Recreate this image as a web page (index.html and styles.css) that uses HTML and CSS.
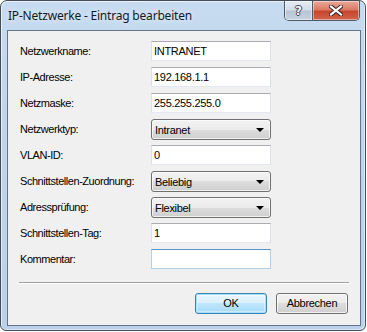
FILE: index.html
```html
<!DOCTYPE html>
<html lang="de">
<head>
    <meta charset="UTF-8">
    <title>IP-Netzwerke - Eintrag bearbeiten</title>
    <link rel="stylesheet" href="styles.css">
</head>
<body>
    <div class="window">
        <div class="titlebar">
            <span class="title">IP-Netzwerke - Eintrag bearbeiten</span>
            <div class="caption-buttons">
                <div class="cap-btn help"><span>?</span></div>
                <div class="cap-btn close">
                    <svg width="14" height="11" viewBox="0 0 14 11">
                        <path d="M2 1.5 L12 9.5 M12 1.5 L2 9.5" stroke="#3b2a2a" stroke-width="4.2" stroke-linecap="square" fill="none"/>
                        <path d="M2 1.5 L12 9.5 M12 1.5 L2 9.5" stroke="#ffffff" stroke-width="2.2" stroke-linecap="square" fill="none"/>
                    </svg>
                </div>
            </div>
        </div>

        <div class="client">
            <div class="form">
                <label>Netzwerkname:</label>
                <div class="textbox">INTRANET</div>

                <label>IP-Adresse:</label>
                <div class="textbox">192.168.1.1</div>

                <label>Netzmaske:</label>
                <div class="textbox">255.255.255.0</div>

                <label>Netzwerktyp:</label>
                <div class="combo"><span>Intranet</span><i class="arrow"></i></div>

                <label>VLAN-ID:</label>
                <div class="textbox">0</div>

                <label>Schnittstellen-Zuordnung:</label>
                <div class="combo"><span>Beliebig</span><i class="arrow"></i></div>

                <label>Adressprüfung:</label>
                <div class="combo"><span>Flexibel</span><i class="arrow"></i></div>

                <label>Schnittstellen-Tag:</label>
                <div class="textbox">1</div>

                <label>Kommentar:</label>
                <div class="textbox focus"></div>
            </div>

            <div class="separator"></div>

            <div class="buttons">
                <div class="btn default">OK</div>
                <div class="btn">Abbrechen</div>
            </div>
        </div>
    </div>
</body>
</html>
```

FILE: styles.css
```css
body {
    margin: 0;
    background: #ffffff;
    font-family: 'Liberation Sans', Arial, sans-serif;
}
.window {
    width: 366px;
    height: 331px;
    box-sizing: border-box;
    border: 1px solid #454c57;
    border-radius: 7px 7px 6px 6px;
    background: linear-gradient(180deg, #c7dbf0 0%, #bed5ed 40%, #b9d1ea 100%);
    box-shadow: inset 1px 1px 0 rgba(255, 255, 255, 0.6), inset -1px -1px 0 rgba(255, 255, 255, 0.5);
    display: flex;
    flex-direction: column;
}
.titlebar {
    height: 29px;
    display: flex;
    justify-content: space-between;
    align-items: flex-start;
}
.title {
    padding: 7px 0 0 7px;
    font-family: 'Noto Sans', sans-serif;
    font-size: 12px;
    line-height: 16px;
    color: #111a26;
    text-shadow: 0 0 6px rgba(255, 255, 255, 0.9);
    letter-spacing: -0.2px;
}
.caption-buttons {
    display: flex;
    margin-right: 5px;
    border: 1px solid #4f5b6b;
    border-top: none;
    border-radius: 0 0 5px 5px;
    overflow: hidden;
}
.cap-btn {
    height: 19px;
    display: flex;
    justify-content: center;
    align-items: center;
    box-shadow: inset 0 0 0 1px rgba(255, 255, 255, 0.45);
}
.help {
    width: 27px;
    border-right: 1px solid #4f5b6b;
    background: linear-gradient(180deg, #e6ecf3 0%, #d3dde8 45%, #b7c5d5 55%, #c6d3e1 100%);
}
.help span {
    font-family: 'DejaVu Sans', sans-serif;
    font-weight: bold;
    font-size: 12px;
    color: #f4f6f8;
    text-shadow: 1px 0 0 #3e4a5a, -1px 0 0 #3e4a5a, 0 1px 0 #3e4a5a, 0 -1px 0 #3e4a5a;
}
.close {
    width: 46px;
    background: linear-gradient(180deg, #e9a899 0%, #dc7c66 45%, #c7452c 55%, #d2644a 100%);
}
.client {
    flex: 1;
    margin: 0 4px 4px 6px;
    border: 1px solid #63748a;
    background: #f0f0f0;
    padding: 10px 12px 0 12px;
    display: flex;
    flex-direction: column;
    font-size: 11px;
    color: #000;
}
.form {
    display: grid;
    grid-template-columns: 131px 120px;
    grid-auto-rows: 26px;
    align-items: start;
}
.form label {
    line-height: 20px;
    letter-spacing: -0.45px;
    white-space: nowrap;
}
.textbox {
    height: 20px;
    box-sizing: border-box;
    border: 1px solid #dbdfe6;
    border-top-color: #abadb3;
    border-bottom-color: #e3e9ef;
    background: #ffffff;
    padding-left: 2px;
    line-height: 18px;
    letter-spacing: -0.3px;
}
.textbox.focus {
    border-color: #b5cfe7;
    border-top-color: #5793c9;
}
.combo {
    height: 21px;
    box-sizing: border-box;
    border: 1px solid #707070;
    border-radius: 3px;
    background: linear-gradient(180deg, #f2f2f2 0%, #ebebeb 50%, #dddddd 50%, #cfcfcf 100%);
    box-shadow: inset 0 0 0 1px rgba(255, 255, 255, 0.7);
    display: flex;
    justify-content: space-between;
    align-items: center;
    padding: 0 6px 0 3px;
    letter-spacing: -0.3px;
}
.arrow {
    width: 0;
    height: 0;
    border-left: 4px solid transparent;
    border-right: 4px solid transparent;
    border-top: 4px solid #000;
}
.separator {
    margin: 7px -1px 0 -1px;
    height: 0;
    border-top: 1px solid #a0a0a0;
    border-bottom: 1px solid #ffffff;
}
.buttons {
    margin-top: 9px;
    display: flex;
    justify-content: flex-end;
    gap: 9px;
}
.btn {
    width: 72px;
    height: 21px;
    box-sizing: border-box;
    border: 1px solid #707070;
    border-radius: 3px;
    background: linear-gradient(180deg, #f2f2f2 0%, #ebebeb 50%, #dddddd 50%, #cfcfcf 100%);
    box-shadow: inset 0 0 0 1px rgba(255, 255, 255, 0.75);
    text-align: center;
    line-height: 19px;
    letter-spacing: -0.3px;
}
.btn.default {
    border-color: #3c7fb1;
    background: linear-gradient(180deg, #eaf6fd 0%, #d9f0fc 50%, #bee6fd 50%, #a7d9f5 100%);
    box-shadow: inset 0 0 0 1px #a6e2ff, inset 0 0 0 2px rgba(255, 255, 255, 0.4);
}
```
